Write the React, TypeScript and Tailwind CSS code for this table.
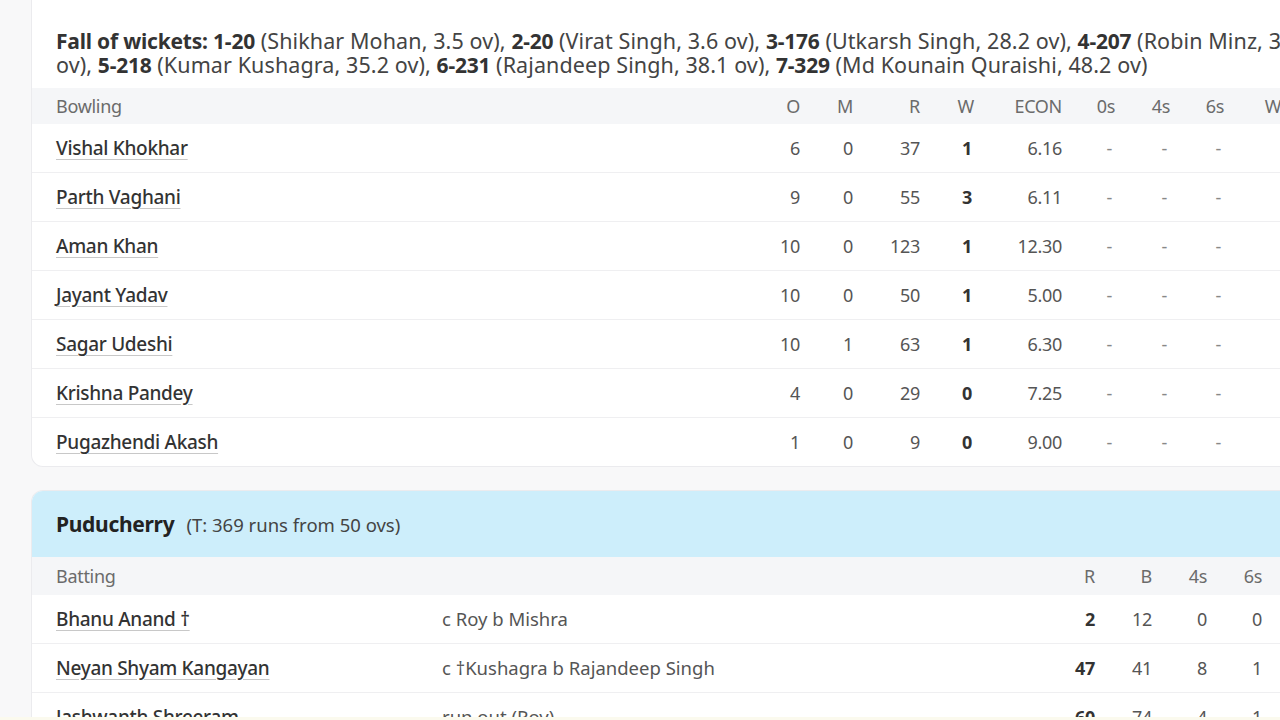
import React from 'react';

const font = { fontFamily: '"Segoe UI", "Noto Sans", sans-serif' };

const bowlers = [
  { name: 'Vishal Khokhar', o: '6', m: '0', r: '37', w: '1', econ: '6.16' },
  { name: 'Parth Vaghani', o: '9', m: '0', r: '55', w: '3', econ: '6.11' },
  { name: 'Aman Khan', o: '10', m: '0', r: '123', w: '1', econ: '12.30' },
  { name: 'Jayant Yadav', o: '10', m: '0', r: '50', w: '1', econ: '5.00' },
  { name: 'Sagar Udeshi', o: '10', m: '1', r: '63', w: '1', econ: '6.30' },
  { name: 'Krishna Pandey', o: '4', m: '0', r: '29', w: '0', econ: '7.25' },
  { name: 'Pugazhendi Akash', o: '1', m: '0', r: '9', w: '0', econ: '9.00' },
];

const batters = [
  { name: 'Bhanu Anand †', how: 'c Roy b Mishra', r: '2', b: '12', f: '0', s: '0', sr: '16.66' },
  { name: 'Neyan Shyam Kangayan', how: 'c †Kushagra b Rajandeep Singh', r: '47', b: '41', f: '8', s: '1', sr: '114.63' },
  { name: 'Jashwanth Shreeram', how: 'run out (Roy)', r: '60', b: '74', f: '4', s: '1', sr: '81.08' },
];

const fow: [string, string][] = [
  ['1-20', 'Shikhar Mohan, 3.5 ov'],
  ['2-20', 'Virat Singh, 3.6 ov'],
  ['3-176', 'Utkarsh Singh, 28.2 ov'],
  ['4-207', 'Robin Minz, 32.4 ov'],
];
const fow2: [string, string][] = [
  ['5-218', 'Kumar Kushagra, 35.2 ov'],
  ['6-231', 'Rajandeep Singh, 38.1 ov'],
  ['7-329', 'Md Kounain Quraishi, 48.2 ov'],
];

const Cell = ({ w, children, bold }: { w: string; children: React.ReactNode; bold?: boolean }) => (
  <div className={`${w} shrink-0 text-right ${bold ? 'font-bold text-[#333]' : ''}`}>{children}</div>
);

const Wicket = ({ s, d, last }: { s: string; d: string; last?: boolean }) => (
  <span>
    <span className="text-[21px] font-bold tracking-[-0.2px] text-[#333]">{s}</span> ({d}){last ? '' : ', '}
  </span>
);

export default function App() {
  return (
    <div className="h-[720px] w-[1280px] overflow-hidden bg-[#f8f8f9] text-[#444]" style={font}>
      <div className="pl-[31px]">
        {/* Bowling card (continues from above) */}
        <div className="w-[1400px] rounded-b-xl border-x border-b border-[#ebebee] bg-white">
          <div className="whitespace-nowrap px-6 pt-[29px] pb-[11px] text-[21.5px] leading-[24px] tracking-[0.1px] text-[#444]">
            <span className="text-[21px] font-bold tracking-[-0.2px] text-[#333]">Fall of wickets: </span>
            {fow.map(([s, d]) => (
              <Wicket key={s} s={s} d={d} />
            ))}
            <br />
            ov),{' '}
            {fow2.map(([s, d], i) => (
              <Wicket key={s} s={s} d={d} last={i === fow2.length - 1} />
            ))}
          </div>

          <div className="flex h-[36px] items-center bg-[#f5f6f8] pl-6 text-[18px] tracking-[-0.3px] text-[#6b6b6b]">
            <div className="w-[700px] shrink-0">Bowling</div>
            <Cell w="w-[44px]">O</Cell>
            <Cell w="w-[53px]">M</Cell>
            <Cell w="w-[67px]">R</Cell>
            <Cell w="w-[54px]">W</Cell>
            <Cell w="w-[88px]">ECON</Cell>
            <Cell w="w-[53px]">0s</Cell>
            <Cell w="w-[55px]">4s</Cell>
            <Cell w="w-[54px]">6s</Cell>
            <Cell w="w-[70px]">WD</Cell>
            <Cell w="w-[54px]">NB</Cell>
          </div>

          {bowlers.map((b, i) => (
            <div
              key={b.name}
              className={`flex items-center pl-6 text-[18px] tracking-[-0.3px] text-[#555] ${i > 0 ? 'h-[49px] border-t border-[#efeff1]' : 'h-[48px]'}`}
            >
              <div className="w-[700px] shrink-0">
                <span className="text-[19px] font-medium text-[#333] underline decoration-[#c8c8c8] underline-offset-[4px]">
                  {b.name}
                </span>
              </div>
              <Cell w="w-[44px]">{b.o}</Cell>
              <Cell w="w-[53px]">{b.m}</Cell>
              <Cell w="w-[67px]">{b.r}</Cell>
              <Cell w="w-[54px]" bold>
                <span className="pr-[2px]">{b.w}</span>
              </Cell>
              <Cell w="w-[88px]">{b.econ}</Cell>
              <Cell w="w-[53px]"><span className="pr-[3px] text-[#888]">-</span></Cell>
              <Cell w="w-[55px]"><span className="pr-[3px] text-[#888]">-</span></Cell>
              <Cell w="w-[54px]"><span className="pr-[3px] text-[#888]">-</span></Cell>
              <Cell w="w-[70px]">0</Cell>
              <Cell w="w-[54px]">0</Cell>
            </div>
          ))}
        </div>

        {/* Batting card */}
        <div className="mt-[23px] w-[1400px] overflow-hidden rounded-t-xl border-x border-t border-[#ebebee] bg-white">
          <div className="flex h-[66px] items-center gap-3 bg-[#cdeefb] px-6 pt-[2px]">
            <span className="text-[21px] font-bold tracking-[-0.3px] text-[#222]">Puducherry</span>
            <span className="text-[18.5px] text-[#444]">(T: 369 runs from 50 ovs)</span>
          </div>
          <div className="flex h-[38px] items-center bg-[#f5f6f8] pl-6 text-[18px] tracking-[-0.3px] text-[#6b6b6b]">
            <div className="w-[984px] shrink-0">Batting</div>
            <Cell w="w-[55px]">R</Cell>
            <Cell w="w-[57px]">B</Cell>
            <Cell w="w-[55px]">4s</Cell>
            <Cell w="w-[55px]">6s</Cell>
            <Cell w="w-[80px]">SR</Cell>
          </div>
          {batters.map((b, i) => (
            <div
              key={b.name}
              className={`flex items-center pl-6 text-[18px] tracking-[-0.3px] text-[#555] ${i > 0 ? 'h-[49px] border-t border-[#efeff1]' : 'h-[48px]'}`}
            >
              <div className="w-[386px] shrink-0">
                <span className="text-[19px] font-medium text-[#333] underline decoration-[#c8c8c8] underline-offset-[4px]">
                  {b.name}
                </span>
              </div>
              <div className="w-[598px] shrink-0 text-[18.5px] tracking-normal text-[#555]">{b.how}</div>
              <Cell w="w-[55px]" bold>{b.r}</Cell>
              <Cell w="w-[57px]">{b.b}</Cell>
              <Cell w="w-[55px]">{b.f}</Cell>
              <Cell w="w-[55px]">{b.s}</Cell>
              <Cell w="w-[80px]">{b.sr}</Cell>
            </div>
          ))}
        </div>
      </div>
      <div className="fixed bottom-0 left-0 h-[3px] w-full bg-[#fbfaee]" />
    </div>
  );
}
